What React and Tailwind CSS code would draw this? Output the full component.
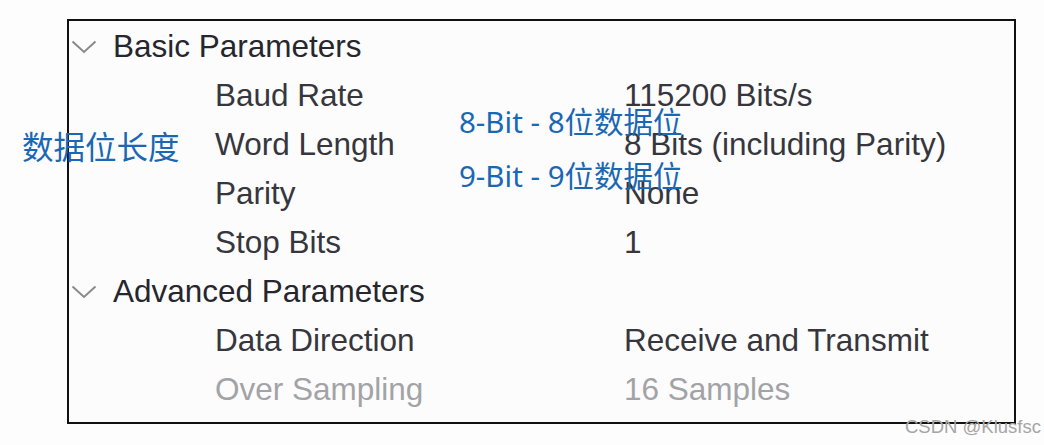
import React from "react";

const Chevron = () => (
  <svg width="26" height="14" viewBox="0 0 26 14" className="shrink-0">
    <polyline points="1.5,1.5 13,12 24.5,1.5" fill="none" stroke="#8a8a8a" strokeWidth="2" />
  </svg>
);

const rows = [
  { type: "h", label: "Basic Parameters" },
  { type: "r", label: "Baud Rate", value: "115200 Bits/s" },
  { type: "r", label: "Word Length", value: "8 Bits (including Parity)" },
  { type: "r", label: "Parity", value: "None" },
  { type: "r", label: "Stop Bits", value: "1" },
  { type: "h", label: "Advanced Parameters" },
  { type: "r", label: "Data Direction", value: "Receive and Transmit" },
  { type: "r", label: "Over Sampling", value: "16 Samples", dim: true },
];

export default function App() {
  return (
    <div
      className="relative w-[1044px] h-[445px] bg-[#fdfdfd] overflow-hidden pt-[19px] pl-[67px]"
      style={{ fontFamily: '"Liberation Sans", Arial, sans-serif' }}
    >
      <div className="w-[949px] h-[405px] border-2 border-[#111] bg-[#fcfcfd] pt-[1px]">
        {rows.map((r, i) =>
          r.type === "h" ? (
            <div key={i} className="flex items-center h-[49px] pl-[2px] text-[31.5px] text-[#26262c]">
              <Chevron />
              <span className="ml-[16px]">{r.label}</span>
            </div>
          ) : (
            <div
              key={i}
              className={`flex items-center h-[49px] text-[31.5px] ${r.dim ? "text-[#a3a3a6]" : "text-[#36363c]"}`}
            >
              <span className="ml-[146px] w-[409px]">{r.label}</span>
              <span>{r.value}</span>
            </div>
          )
        )}
      </div>

      <div
        className="absolute left-[22px] top-[125px] text-[31.5px] leading-[40px] text-[#1a67b4]"
        style={{ fontFamily: '"Noto Sans CJK SC", "Noto Sans", sans-serif' }}
      >
        数据位长度
      </div>
      <div
        className="absolute left-[459px] top-[104px] text-[29.5px] leading-[36px] text-[#1a67b4] flex flex-col gap-[18px]"
        style={{ fontFamily: '"Noto Sans", "Noto Sans CJK SC", sans-serif' }}
      >
        <span>8-Bit - 8位数据位</span>
        <span>9-Bit - 9位数据位</span>
      </div>
      <div className="absolute left-[905px] top-[416px] text-[18.5px] leading-[22px] text-[#a6a6a6]">
        CSDN @Klusfsc
      </div>
    </div>
  );
}
